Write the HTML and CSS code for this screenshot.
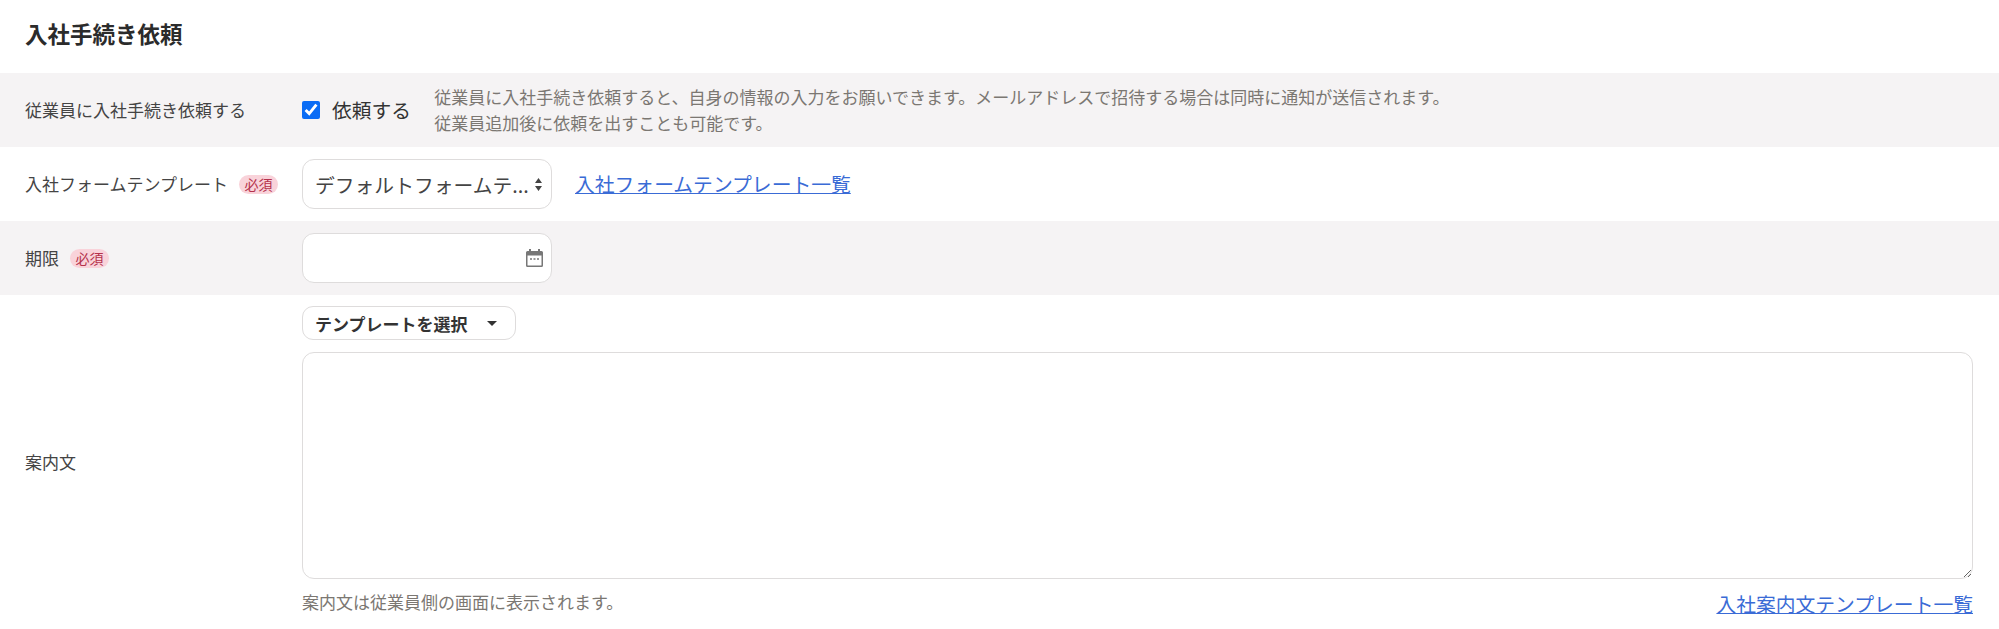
FILE: index.html

```html
<!DOCTYPE html>
<html lang="ja">
<head>
    <meta charset="UTF-8">
    <meta name="viewport" content="width=device-width, initial-scale=1.0">
    <title>入社手続き依頼</title>
    <link rel="stylesheet" href="styles.css">
</head>
<body>
    <h2 class="section-title">入社手続き依頼</h2>

    <div class="form-row shaded">
        <div class="form-label">従業員に入社手続き依頼する</div>
        <div class="form-field">
            <label class="check-label">
                <input type="checkbox" class="check-input" checked>
                依頼する
            </label>
            <p class="help-text">従業員に入社手続き依頼すると、自身の情報の入力をお願いできます。メールアドレスで招待する場合は同時に通知が送信されます。<br>従業員追加後に依頼を出すことも可能です。</p>
        </div>
    </div>

    <div class="form-row">
        <div class="form-label">入社フォームテンプレート<span class="badge">必須</span></div>
        <div class="form-field">
            <div class="input-wrap">
                <select class="form-control">
                    <option>デフォルトフォームテ...</option>
                </select>
                <svg class="select-arrows" width="7" height="13" viewBox="0 0 7 13">
                    <path d="M3.5 0 7 5H0zM0 8h7l-3.5 5z" fill="#444"/>
                </svg>
            </div>
            <a href="#" class="link">入社フォームテンプレート一覧</a>
        </div>
    </div>

    <div class="form-row shaded">
        <div class="form-label">期限<span class="badge">必須</span></div>
        <div class="form-field">
            <div class="input-wrap">
                <input type="text" class="form-control">
                <svg class="date-icon" width="17" height="18" viewBox="0 0 17 18">
                    <path d="M3 0h2v2h7V0h2v2h1.5A1.5 1.5 0 0 1 17 3.500V16.500A1.500 1.500 0 0 1 15.500 18H1.500A1.500 1.500 0 0 1 0 16.500V3.500A1.500 1.500 0 0 1 1.500 2H3zM1.500 6.500V16a.5.5 0 0 0 .5.5H15a.5.5 0 0 0 .5-.5V6.500z" fill="#777"/>
                    <path d="M4 9h2v2H4zM7.500 9h2v2h-2zM11 9h2v2h-2z" fill="#999"/>
                </svg>
            </div>
        </div>
    </div>

    <div class="form-row message-row">
        <div class="form-label">案内文</div>
        <div class="message-field">
            <button type="button" class="template-btn">テンプレートを選択<span class="caret"></span></button>
            <textarea class="message-input"></textarea>
            <div class="message-footer">
                <span class="hint">案内文は従業員側の画面に表示されます。</span>
                <a href="#" class="link">入社案内文テンプレート一覧</a>
            </div>
        </div>
    </div>
</body>
</html>
```

FILE: styles.css

```css
* {
    box-sizing: border-box;
    margin: 0;
    padding: 0;
    font-family: "Noto Sans CJK JP", "Noto Sans", sans-serif;
}

html {
    overflow: hidden;
}

body {
    background-color: white;
    color: #333;
}

.section-title {
    height: 73px;
    padding: 17px 25px 0;
    font-size: 22.5px;
    line-height: 32px;
    font-weight: 700;
    color: #2b2b2b;
}

.form-row {
    display: grid;
    grid-template-columns: 277px 1fr;
    align-items: center;
    min-height: 74px;
    padding: 0 26px 0 25px;
}

.shaded {
    background-color: #f5f3f4;
}

.form-label {
    display: flex;
    align-items: center;
    font-size: 17px;
    line-height: 24px;
    color: #444;
}

.badge {
    margin-left: 11px;
    width: 39px;
    height: 19px;
    border-radius: 10px;
    background-color: #f9d3da;
    color: #b5314c;
    font-size: 14px;
    line-height: 19px;
    text-align: center;
}

.form-field {
    display: flex;
    align-items: center;
}

.check-label {
    display: flex;
    align-items: center;
    font-size: 19.8px;
    line-height: 28px;
    color: #333;
}

.check-input {
    width: 18px;
    height: 18px;
    margin-right: 12px;
    accent-color: #0a6cf5;
}

.help-text {
    margin-left: 23px;
    font-size: 17px;
    line-height: 26px;
    color: #7b7772;
}

.input-wrap {
    position: relative;
    width: 250px;
    height: 50px;
    margin-right: 23px;
}

.form-control {
    display: block;
    width: 100%;
    height: 100%;
    padding: 0 16px 0 12px;
    border: 1.5px solid #dedcdc;
    border-radius: 12px;
    background-color: white;
    color: #444;
    font-size: 19.8px;
    appearance: none;
    outline: none;
}

.select-arrows {
    position: absolute;
    top: 19px;
    right: 10px;
    pointer-events: none;
}

.date-icon {
    position: absolute;
    top: 16px;
    right: 9px;
    pointer-events: none;
}

.link {
    font-size: 19.8px;
    line-height: 28px;
    color: #3a6bd6;
    text-decoration: underline;
}

.message-row {
    padding-top: 11px;
    padding-bottom: 16px;
}

.template-btn {
    display: flex;
    align-items: center;
    height: 34px;
    width: 214px;
    padding: 0 12px;
    border: 1.5px solid #dedcdc;
    border-radius: 11px;
    background-color: white;
    color: #333;
    font-size: 17px;
    font-weight: 700;
}

.caret {
    margin-left: 19px;
    border-top: 5px solid #333;
    border-left: 5.5px solid transparent;
    border-right: 5.5px solid transparent;
}

.message-input {
    display: block;
    width: 100%;
    height: 227px;
    margin-top: 12px;
    border: 1.5px solid #dedcdc;
    border-radius: 12px;
    outline: none;
}

.message-footer {
    display: flex;
    justify-content: space-between;
    align-items: center;
    margin-top: 6px;
}

.message-footer .link {
    margin-top: 5px;
}

.hint {
    font-size: 17px;
    line-height: 26px;
    color: #7b7772;
}
```
